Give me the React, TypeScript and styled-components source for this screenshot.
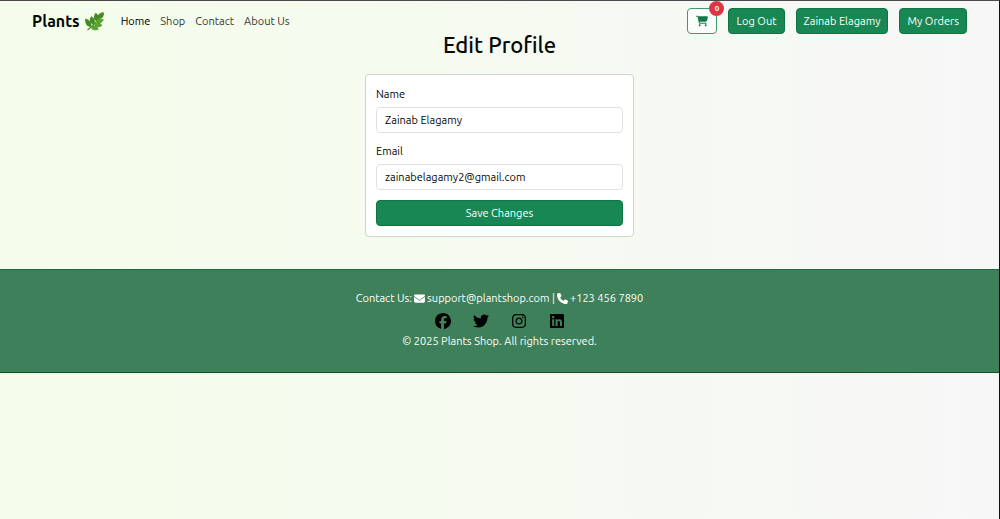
import React, { useState } from "react";
import styled, { createGlobalStyle, css } from "styled-components";
import {
  FaCartShopping,
  FaEnvelope,
  FaFacebook,
  FaInstagram,
  FaLinkedin,
  FaPhone,
  FaTwitter,
} from "react-icons/fa6";

const GlobalStyle = createGlobalStyle`
  *, *::before, *::after { box-sizing: border-box; }
  html { min-height: 100%; }
  body {
    margin: 0;
    font-family: Ubuntu, "Noto Sans", "Open Sans", sans-serif;
    font-size: 11px;
    line-height: 16px;
    color: #050806;
  }
  button, input { font: inherit; color: inherit; }
`;

const Page = styled.div`
  min-height: 100vh;
  border-top: 1px solid #4b494d;
  border-right: 1px solid #111;
  background: linear-gradient(to right, #f4fdea, #f7f7f7);
`;

const Navbar = styled.nav`
  display: flex;
  align-items: center;
  padding: 7px 32px 0;
`;

const Brand = styled.a`
  display: flex;
  align-items: center;
  gap: 5px;
  margin-right: 16px;
  font-size: 16px;
  font-weight: 700;
  line-height: 26px;
  color: #050806;
  text-decoration: none;
`;

const NavLinks = styled.div`
  display: flex;
  gap: 10px;
`;

const NavLink = styled.a<{ $active?: boolean }>`
  color: ${(p) => (p.$active ? "#000" : "#343833")};
  text-decoration: none;
`;

const Actions = styled.div`
  display: flex;
  gap: 11px;
  margin-left: auto;
`;

const solid = css`
  padding: 0 7px;
  background: #198754;
  border-color: #0c7541;
  color: #fff;
`;

const outline = css`
  padding: 0 8px;
  background: #fbfdfb;
  border-color: #3f9a70;
  color: #14794a;
`;

const Button = styled.button<{ $outline?: boolean; $block?: boolean }>`
  position: relative;
  display: flex;
  align-items: center;
  justify-content: center;
  width: ${(p) => (p.$block ? "100%" : "auto")};
  height: 26px;
  border: 1px solid;
  border-radius: 4px;
  white-space: nowrap;
  cursor: pointer;
  ${(p) => (p.$outline ? outline : solid)}
`;

const Badge = styled.span`
  position: absolute;
  top: -8px;
  right: -8px;
  width: 15px;
  height: 15px;
  border-radius: 50%;
  background: #dc3545;
  color: #fff;
  font-size: 8px;
  font-weight: 700;
  line-height: 15px;
  text-align: center;
`;

const Main = styled.main`
  display: flex;
  flex-direction: column;
  align-items: center;
  padding-bottom: 32px;
`;

const Title = styled.h2`
  margin: 0 0 18px;
  font-size: 22px;
  font-weight: 500;
  line-height: 22px;
`;

const Card = styled.form`
  width: 100%;
  max-width: 269px;
  padding: 11px 10px 10px;
  border: 1px solid #d0d4ce;
  border-radius: 4px;
  background: #fff;
`;

const Field = styled.div`
  display: flex;
  flex-direction: column;
  gap: 5px;
  margin-bottom: 10px;
`;

const Label = styled.label`
  line-height: 16px;
`;

const Input = styled.input`
  width: 100%;
  height: 26px;
  padding: 0 8px;
  border: 1px solid #dee2e6;
  border-radius: 4px;
  background: #fff;
  outline: none;
`;

const Footer = styled.footer`
  display: flex;
  flex-direction: column;
  align-items: center;
  padding: 20px 16px 23px;
  border-top: 1px solid #1d6a42;
  border-bottom: 1px solid #0f5127;
  background: #3e8059;
  color: #fff;
`;

const FooterLine = styled.p`
  display: flex;
  align-items: center;
  gap: 2px;
  margin: 0;
`;

const Socials = styled.div`
  display: flex;
  gap: 22px;
  margin: 7px 0 4px;
`;

const SocialLink = styled.a`
  display: flex;
  color: #000;
`;

function Herb() {
  const leaf = "M0 0C-4 -2 -4 -6 0 -10C4 -6 4 -2 0 0Z";
  return (
    <svg width="20" height="20" viewBox="0 0 24 24" aria-hidden="true">
      <path d="M3 23C6 20 12 16 19 6" fill="none" stroke="#3d7a1e" strokeWidth="1.4" />
      <g fill="#458a22">
        <path d={leaf} transform="translate(16 9) rotate(42)" />
        <path d={leaf} transform="translate(14 12) rotate(-6)" />
        <path d={leaf} transform="translate(10 16) rotate(-16)" />
        <path d={leaf} transform="translate(7 19) rotate(-34) scale(1 1.2)" />
      </g>
      <g fill="#5ba431">
        <path d={leaf} transform="translate(13 13) rotate(76)" />
        <path d={leaf} transform="translate(11 16) rotate(98)" />
        <path d={leaf} transform="translate(7 19) rotate(106)" />
      </g>
    </svg>
  );
}

const socials = [
  { label: "Facebook", Icon: FaFacebook },
  { label: "Twitter", Icon: FaTwitter },
  { label: "Instagram", Icon: FaInstagram },
  { label: "LinkedIn", Icon: FaLinkedin },
];

export default function App() {
  const [name, setName] = useState("Zainab Elagamy");
  const [email, setEmail] = useState("zainabelagamy2@gmail.com");

  return (
    <>
      <GlobalStyle />
      <Page>
        <Navbar>
          <Brand href="#">
            Plants <Herb />
          </Brand>
          <NavLinks>
            <NavLink href="#" $active>Home</NavLink>
            <NavLink href="#shop">Shop</NavLink>
            <NavLink href="#contact">Contact</NavLink>
            <NavLink href="#about">About Us</NavLink>
          </NavLinks>
          <Actions>
            <Button type="button" $outline aria-label="Cart">
              <FaCartShopping size={12} />
              <Badge>0</Badge>
            </Button>
            <Button type="button">Log Out</Button>
            <Button type="button">Zainab Elagamy</Button>
            <Button type="button">My Orders</Button>
          </Actions>
        </Navbar>
        <Main>
          <Title>Edit Profile</Title>
          <Card onSubmit={(e) => e.preventDefault()}>
            <Field>
              <Label htmlFor="name">Name</Label>
              <Input id="name" value={name} onChange={(e) => setName(e.target.value)} />
            </Field>
            <Field>
              <Label htmlFor="email">Email</Label>
              <Input id="email" type="email" value={email} onChange={(e) => setEmail(e.target.value)} />
            </Field>
            <Button type="submit" $block>Save Changes</Button>
          </Card>
        </Main>
        <Footer>
          <FooterLine>
            Contact Us: <FaEnvelope size={11} /> support@plantshop.com | <FaPhone size={11} /> +123 456 7890
          </FooterLine>
          <Socials>
            {socials.map(({ label, Icon }) => (
              <SocialLink key={label} href="#" aria-label={label}>
                <Icon size={16} />
              </SocialLink>
            ))}
          </Socials>
          <FooterLine>© 2025 Plants Shop. All rights reserved.</FooterLine>
        </Footer>
      </Page>
    </>
  );
}
